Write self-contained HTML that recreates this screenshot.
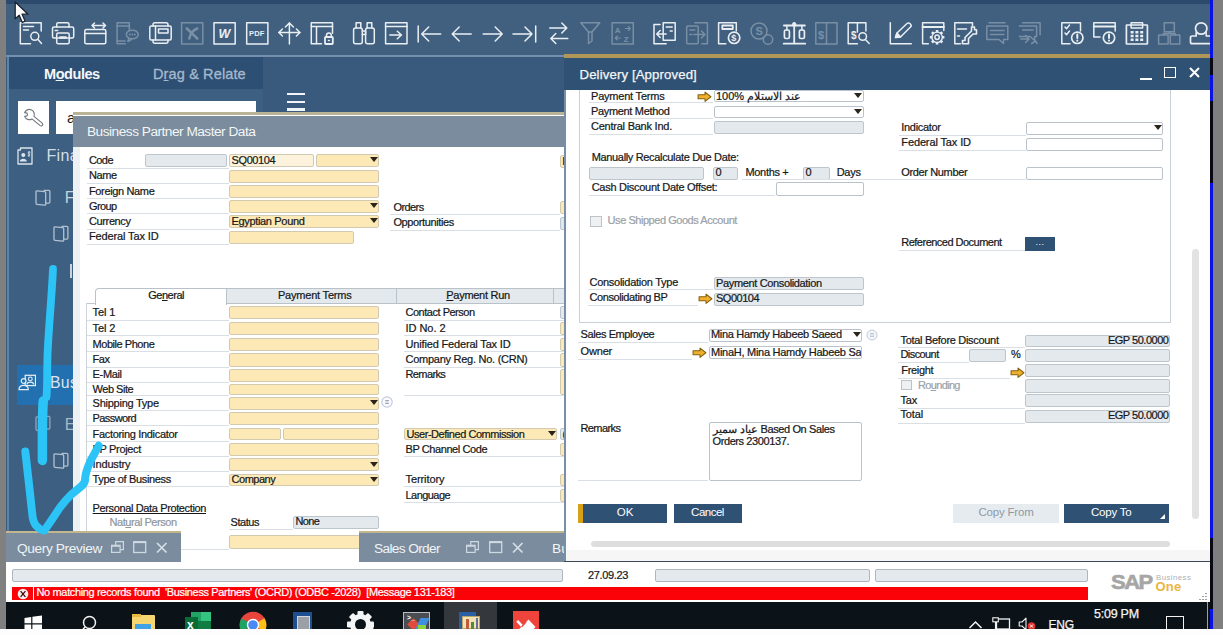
<!DOCTYPE html>
<html><head><meta charset="utf-8"><title>SAP Business One</title>
<style>
*{box-sizing:border-box;margin:0;padding:0}
html,body{width:1223px;height:635px;overflow:hidden;background:#fff}
body{font-family:"Liberation Sans",sans-serif;font-size:11px;color:#111;position:relative}
#root{position:absolute;left:0;top:0;width:1223px;height:635px;overflow:hidden;background:#fff}
.a{position:absolute}
.t{position:absolute;white-space:nowrap;line-height:1}
.lbl{position:absolute;white-space:nowrap;font-size:11px;line-height:13px;height:13px;color:#16181a;-webkit-text-stroke:.220px currentColor}
.ul{position:absolute;height:1px;background:#d9dfe4}
.fy{position:absolute;background:#fde9b5;border:1px solid #d2cab0;border-radius:2px}
.fg{position:absolute;background:#e4e9ed;border:1px solid #bdc6cd;border-radius:2px}
.fw{position:absolute;background:#fff;border:1px solid #bac3cb;border-radius:2px}
.ft{position:absolute;left:1.500px;top:-1.500px;white-space:nowrap;font-size:11px;line-height:12px;color:#16181a;-webkit-text-stroke:.220px currentColor}
.dd{position:absolute;right:.500px;top:2.200px;width:0;height:0;border-left:4px solid transparent;border-right:4px solid transparent;border-top:5px solid #2a241a}
.ic{position:absolute;overflow:visible}
.ic *{fill:none;stroke:#e9eef3;stroke-width:1.5;stroke-linecap:round;stroke-linejoin:round}
.ic.dim{opacity:.32}
</style></head>
<body><div id="root">
<div class="a" style="left:0;top:0;width:6px;height:629px;background:#808080"></div>
<div class="a" style="left:1212px;top:0;width:11px;height:629px;background:#7f7f7f"></div>
<div class="a" style="left:1209.500px;top:0;width:3.500px;height:629px;background:#0a0a14"></div>
<div class="a" style="left:1210px;top:0;width:3px;height:101px;background:#0b12e8"></div>
<div class="a" style="left:1210px;top:58px;width:3px;height:17px;background:#0a0a14"></div>
<div class="a" style="left:1210px;top:183px;width:3px;height:355px;background:#0b12e8"></div>
<div class="a" style="left:1210px;top:609px;width:3px;height:20px;background:#0b12e8"></div>
<div class="a" style="left:6px;top:0;width:1204px;height:602px;background:#395a7c"></div>
<div class="a" style="left:6px;top:0;width:1204px;height:4px;background:#2b4a6c"></div>
<div class="a" style="left:6px;top:4px;width:1204px;height:51px;background:#41607f"></div>
<div class="a" style="left:6px;top:55px;width:1204px;height:2px;background:#7490ad"></div>
<div class="a" style="left:7px;top:57px;width:256px;height:32.800px;background:#2d4f74"></div>
<div class="a" style="left:7px;top:89px;width:256px;height:450px;background:#3c5f82"></div>
<div class="a" style="left:7px;top:57px;width:1.500px;height:476px;background:#5f82a5"></div>
<div class="t" style="left:44px;top:67px;font-size:14.500px;font-weight:bold;color:#f4f7fa;letter-spacing:-0.450px">M<u>o</u>dules</div>
<div class="t" style="left:153px;top:67px;font-size:14.500px;color:#a6b9cc;letter-spacing:0.130px;-webkit-text-stroke:.300px #a6b9cc">D<u>r</u>ag &amp; Relate</div>
<div class="a" style="left:17.500px;top:101px;width:31.500px;height:33.300px;background:#fff"></div>
<div class="a" style="left:55.700px;top:100.700px;width:200px;height:33.600px;background:#fff"></div>
<svg class="a" style="left:17px;top:101px" width="32" height="33" viewBox="0 0 32 33"><path d="M7.600 11.600A5 5 0 0 1 16.980 15.430L25.200 22.160A1.600 1.600 0 0 1 23.190 24.640L14.960 17.900A5 5 0 0 1 7.600 15.400L10 14.900A2.400 2.400 0 0 0 10 12.100Z" fill="none" stroke="#73787d" stroke-width="1.150" stroke-linejoin="round"/></svg>
<div class="t" style="left:67px;top:110px;font-size:15px;color:#222">a</div>
<div class="a" style="left:287px;top:92.5px;width:18px;height:2.300px;background:#f2f5f8"></div>
<div class="a" style="left:287px;top:100.5px;width:18px;height:2.300px;background:#f2f5f8"></div>
<div class="a" style="left:287px;top:108.3px;width:18px;height:2.300px;background:#f2f5f8"></div>
<svg class="a" style="left:16.500px;top:147px" width="16" height="18" viewBox="0 0 16 18"><path d="M3.500 3V1h11.500v16H1V3z" fill="none" stroke="#dbe4ec" stroke-width="1.300" stroke-linejoin="round"/><circle cx="6.300" cy="8" r="2" fill="#dbe4ec"/><path d="M2.800 14.500c0-3.600 7-3.600 7 0z" fill="#dbe4ec"/><path d="M12 4v6M13.300 5.300c-1.800-1-3 .8-1.300 1.500 1.700.700.500 2.500-1.300 1.500" fill="none" stroke="#dbe4ec" stroke-width=".900"/></svg>
<div class="t" style="left:46.500px;top:148px;font-size:16px;color:#d3dde7;letter-spacing:.300px">Fina</div>
<svg class="a" style="left:34.5px;top:188.8px" width="17" height="18" viewBox="0 0 17 18"><path d="M1 2.800q0-1.100 1.100-1l7.600.900q1 .100 1 1.100v11.400q0 1.100-1.100 1l-7.600-.900q-1-.100-1-1.100z" fill="none" stroke="#b3c1cf" stroke-width="1.300" stroke-linejoin="round"/><path d="M8.500 1.300h5.300q1.100 0 1.100 1.100v10.600q0 1.100-1.100 1.100h-3" fill="none" stroke="#b3c1cf" stroke-width="1.300" stroke-linejoin="round"/></svg>
<div class="t" style="left:64.800px;top:189.500px;font-size:15.800px;color:#c8d3de">F</div>
<svg class="a" style="left:52.5px;top:225px" width="17" height="18" viewBox="0 0 17 18"><path d="M1 2.800q0-1.100 1.100-1l7.600.900q1 .100 1 1.100v11.400q0 1.100-1.100 1l-7.600-.900q-1-.100-1-1.100z" fill="none" stroke="#b3c1cf" stroke-width="1.300" stroke-linejoin="round"/><path d="M8.500 1.300h5.300q1.100 0 1.100 1.100v10.600q0 1.100-1.100 1.100h-3" fill="none" stroke="#b3c1cf" stroke-width="1.300" stroke-linejoin="round"/></svg>
<div class="a" style="left:70.300px;top:264px;width:1.800px;height:14px;background:#c8d3de"></div>
<div class="a" style="left:16.600px;top:365.400px;width:57px;height:39.600px;background:#2270b0"></div>
<svg class="a" style="left:17.600px;top:373.500px" width="18.500" height="17" viewBox="0 0 18 16"><rect x="7" y="1" width="10" height="10" fill="none" stroke="#e6edf3" stroke-width="1.200"/><circle cx="12" cy="4.500" r="1.800" fill="none" stroke="#e6edf3" stroke-width="1.100"/><path d="M8.800 10c0-3.200 6.400-3.200 6.400 0" fill="none" stroke="#e6edf3" stroke-width="1.100"/><circle cx="5.500" cy="6.500" r="2.300" fill="#2270b0" stroke="#e6edf3" stroke-width="1.200"/><path d="M1 15c0-5.500 9-5.500 9 0z" fill="#2270b0" stroke="#e6edf3" stroke-width="1.200"/></svg>
<div class="t" style="left:50px;top:374.500px;font-size:15.800px;color:#dbe5ee;letter-spacing:.300px">Bus</div>
<svg class="a" style="left:35px;top:415px" width="17" height="18" viewBox="0 0 17 18"><path d="M1 2.800q0-1.100 1.100-1l7.600.900q1 .100 1 1.100v11.400q0 1.100-1.100 1l-7.600-.900q-1-.100-1-1.100z" fill="none" stroke="#8fa5bb" stroke-width="1.300" stroke-linejoin="round"/><path d="M8.500 1.300h5.300q1.100 0 1.100 1.100v10.600q0 1.100-1.100 1.100h-3" fill="none" stroke="#8fa5bb" stroke-width="1.300" stroke-linejoin="round"/></svg>
<div class="t" style="left:64.800px;top:417px;font-size:15.800px;color:#aab8c8">E</div>
<svg class="a" style="left:52.8px;top:451.5px" width="17" height="18" viewBox="0 0 17 18"><path d="M1 2.800q0-1.100 1.100-1l7.600.900q1 .100 1 1.100v11.400q0 1.100-1.100 1l-7.600-.900q-1-.100-1-1.100z" fill="none" stroke="#b3c1cf" stroke-width="1.300" stroke-linejoin="round"/><path d="M8.500 1.300h5.300q1.100 0 1.100 1.100v10.600q0 1.100-1.100 1.100h-3" fill="none" stroke="#b3c1cf" stroke-width="1.300" stroke-linejoin="round"/></svg>
<div class="a" style="left:72.500px;top:113px;width:493.500px;height:449px;background:#fff"></div>
<div class="a" style="left:72.500px;top:146px;width:7.500px;height:416px;background:#eef1f4"></div>
<div class="a" style="left:72.500px;top:112.200px;width:493.500px;height:3.300px;background:#bab295"></div>
<div class="a" style="left:72.500px;top:115.500px;width:493.500px;height:31px;background:#7a8c9d"></div>
<div class="t" style="left:87px;top:124.5px;font-size:13.7px;color:#f3f6f8;letter-spacing:-0.509px;">Business Partner Master Data</div>
<div class="lbl" style="left:89px;top:154.2px;letter-spacing:-0.599px;">Code</div>
<div class="ul" style="left:87px;top:167.5px;width:142px"></div>
<div class="lbl" style="left:89px;top:169.45px;letter-spacing:-0.436px;">Name</div>
<div class="ul" style="left:87px;top:182.75px;width:142px"></div>
<div class="lbl" style="left:89px;top:184.7px;letter-spacing:-0.358px;">Foreign Name</div>
<div class="ul" style="left:87px;top:198px;width:142px"></div>
<div class="lbl" style="left:89px;top:199.95px;letter-spacing:-0.595px;">Group</div>
<div class="ul" style="left:87px;top:213.25px;width:142px"></div>
<div class="lbl" style="left:89px;top:215.2px;letter-spacing:-0.378px;">Currency</div>
<div class="ul" style="left:87px;top:228.5px;width:142px"></div>
<div class="lbl" style="left:89px;top:230.45px;letter-spacing:-0.131px;">Federal Tax ID</div>
<div class="ul" style="left:87px;top:243.75px;width:142px"></div>
<div class="fg" style="left:145px;top:154.3px;width:82px;height:13.2px;"></div>
<div class="fy" style="left:229px;top:154.3px;width:85px;height:13.2px;background:#fdf3dd"><span class="ft" style="letter-spacing:-0.383px;">SQ00104</span></div>
<div class="fy" style="left:316px;top:154.3px;width:63px;height:13.2px;"><i class="dd"></i></div>
<div class="fy" style="left:229px;top:169.55px;width:150px;height:13.2px;"></div>
<div class="fy" style="left:229px;top:184.8px;width:150px;height:13.2px;"></div>
<div class="fy" style="left:229px;top:200.05px;width:150px;height:13.2px;"><i class="dd"></i></div>
<div class="fy" style="left:229px;top:215.3px;width:150px;height:13.2px;"><span class="ft" style="letter-spacing:-0.334px;">Egyptian Pound</span><i class="dd"></i></div>
<div class="fy" style="left:229px;top:230.55px;width:125px;height:13.2px;"></div>
<div class="lbl" style="left:393.4px;top:200.8px;letter-spacing:-0.570px;">Orders</div>
<div class="ul" style="left:390px;top:214px;width:170px"></div>
<div class="lbl" style="left:393.4px;top:216.3px;letter-spacing:-0.387px;">Opportunities</div>
<div class="ul" style="left:390px;top:229.5px;width:170px"></div>
<div class="fy" style="left:560px;top:155px;width:20px;height:13.2px;"><span class="ft" style="letter-spacing:-0.330px;"><b>E</b></span></div>
<div class="fy" style="left:560px;top:201.3px;width:20px;height:12.7px;"></div>
<div class="fg" style="left:560px;top:217px;width:20px;height:12.5px;background:#dfe6ee"></div>
<div class="a" style="left:86px;top:303.300px;width:481px;height:1px;background:#bfc7ce"></div>
<div class="a" style="left:86px;top:303.300px;width:1px;height:259px;background:#cdd3d9"></div>
<div class="a" style="left:226px;top:287.500px;width:171px;height:16px;background:#e3e9ed;border:1px solid #b9c1c9;border-left:none"></div>
<div class="a" style="left:397px;top:287.500px;width:157px;height:16px;background:#e3e9ed;border:1px solid #b9c1c9;border-left:none"></div>
<div class="a" style="left:554px;top:287.500px;width:20px;height:16px;background:#e3e9ed;border:1px solid #b9c1c9;border-left:none"></div>
<div class="a" style="left:95px;top:287.500px;width:132px;height:17px;background:#fff;border:1px solid #b9c1c9;border-bottom:none;border-radius:4px 0 0 0"></div>
<div class="lbl" style="left:148.2px;top:289px;letter-spacing:-0.462px;">Ge<u>n</u>eral</div>
<div class="lbl" style="left:277.9px;top:289px;letter-spacing:-0.193px;">Payment Terms</div>
<div class="lbl" style="left:446.3px;top:289px;letter-spacing:-0.286px;"><u>P</u>ayment Run</div>
<div class="lbl" style="left:92.6px;top:306.15px;letter-spacing:-0.107px;">Tel 1</div>
<div class="ul" style="left:87px;top:319.5px;width:142px"></div>
<div class="fy" style="left:229px;top:306.2px;width:150px;height:13.3px;"></div>
<div class="lbl" style="left:92.6px;top:321.85px;letter-spacing:-0.107px;">Tel 2</div>
<div class="ul" style="left:87px;top:335.2px;width:142px"></div>
<div class="fy" style="left:229px;top:321.9px;width:150px;height:13.3px;"></div>
<div class="lbl" style="left:92.6px;top:337.55px;letter-spacing:-0.464px;">Mobile Phone</div>
<div class="ul" style="left:87px;top:350.9px;width:142px"></div>
<div class="fy" style="left:229px;top:337.6px;width:150px;height:13.3px;"></div>
<div class="lbl" style="left:92.6px;top:353.25px;letter-spacing:-0.446px;">Fax</div>
<div class="ul" style="left:87px;top:366.6px;width:142px"></div>
<div class="fy" style="left:229px;top:353.3px;width:150px;height:13.3px;"></div>
<div class="lbl" style="left:92.6px;top:368.45px;letter-spacing:-0.345px;">E-Mail</div>
<div class="ul" style="left:87px;top:381.8px;width:142px"></div>
<div class="fy" style="left:229px;top:368.5px;width:150px;height:13.3px;"></div>
<div class="lbl" style="left:92.6px;top:382.75px;letter-spacing:-0.491px;">Web Site</div>
<div class="ul" style="left:87px;top:395.2px;width:142px"></div>
<div class="fy" style="left:229px;top:383.7px;width:150px;height:11.5px;"></div>
<div class="lbl" style="left:92.6px;top:397px;letter-spacing:-0.255px;">Shipping Type</div>
<div class="ul" style="left:87px;top:410.1px;width:142px"></div>
<div class="fy" style="left:229px;top:397.3px;width:150px;height:12.8px;"><i class="dd"></i></div>
<div class="lbl" style="left:92.6px;top:412.2px;letter-spacing:-0.600px;">Password</div>
<div class="ul" style="left:87px;top:425.4px;width:142px"></div>
<div class="fy" style="left:229px;top:412.4px;width:150px;height:13px;"></div>
<div class="lbl" style="left:92.6px;top:427.65px;letter-spacing:-0.321px;">Factoring Indicator</div>
<div class="ul" style="left:87px;top:440.5px;width:142px"></div>
<div class="fy" style="left:229px;top:428.2px;width:52px;height:12.3px;"></div>
<div class="fy" style="left:283px;top:428.2px;width:96px;height:12.3px;"></div>
<div class="lbl" style="left:92.6px;top:442.75px;letter-spacing:-0.337px;">BP Project</div>
<div class="ul" style="left:87px;top:455.6px;width:142px"></div>
<div class="fy" style="left:229px;top:443.3px;width:150px;height:12.3px;"></div>
<div class="lbl" style="left:92.6px;top:457.85px;letter-spacing:-0.166px;">Industry</div>
<div class="ul" style="left:87px;top:470.7px;width:142px"></div>
<div class="fy" style="left:229px;top:458.4px;width:150px;height:12.3px;"><i class="dd"></i></div>
<div class="lbl" style="left:92.6px;top:473.3px;letter-spacing:-0.342px;">Type of Business</div>
<div class="ul" style="left:87px;top:486.4px;width:142px"></div>
<div class="fy" style="left:229px;top:473.6px;width:150px;height:12.8px;"><span class="ft" style="letter-spacing:-0.468px;">Company</span><i class="dd"></i></div>
<svg class="a" style="left:381px;top:396.3px" width="12" height="12" viewBox="0 0 12 12"><circle cx="6" cy="6" r="5.200" fill="#fbfbfe" stroke="#c3c9e0" stroke-width="1.200"/><path d="M4.200 4.800h3.600M4.200 7.200h3.600" stroke="#8087a6" stroke-width="1.100"/></svg>
<div class="lbl" style="left:405.5px;top:306.15px;letter-spacing:-0.480px;">Contact Person</div>
<div class="ul" style="left:404px;top:319.5px;width:160px"></div>
<div class="fg" style="left:560px;top:306.2px;width:20px;height:13.3px;"></div>
<div class="lbl" style="left:405.5px;top:321.85px;letter-spacing:-0.043px;">ID No. 2</div>
<div class="ul" style="left:404px;top:335.2px;width:160px"></div>
<div class="fy" style="left:560px;top:321.9px;width:20px;height:13.3px;"></div>
<div class="lbl" style="left:405.5px;top:337.55px;letter-spacing:-0.165px;">Unified Federal Tax ID</div>
<div class="ul" style="left:404px;top:350.9px;width:160px"></div>
<div class="fy" style="left:560px;top:337.6px;width:20px;height:13.3px;"></div>
<div class="lbl" style="left:405.5px;top:353.25px;letter-spacing:-0.262px;">Company Reg. No. (CRN)</div>
<div class="ul" style="left:404px;top:366.6px;width:160px"></div>
<div class="fy" style="left:560px;top:353.3px;width:20px;height:13.3px;"></div>
<div class="lbl" style="left:405.5px;top:368.45px;letter-spacing:-0.615px;">Remarks</div>
<div class="ul" style="left:404px;top:395.2px;width:160px"></div>
<div class="fy" style="left:560px;top:368.5px;width:20px;height:26.7px;"></div>
<div class="lbl" style="left:405.5px;top:442.75px;letter-spacing:-0.418px;">BP Channel Code</div>
<div class="ul" style="left:404px;top:455.6px;width:160px"></div>
<div class="fy" style="left:560px;top:443.3px;width:20px;height:12.3px;"></div>
<div class="lbl" style="left:405.5px;top:473.3px;letter-spacing:-0.092px;">Territory</div>
<div class="ul" style="left:404px;top:486.4px;width:160px"></div>
<div class="fy" style="left:560px;top:473.6px;width:20px;height:12.8px;"></div>
<div class="lbl" style="left:405.5px;top:488.5px;letter-spacing:-0.543px;">Language</div>
<div class="ul" style="left:404px;top:501.6px;width:160px"></div>
<div class="fy" style="left:560px;top:488.8px;width:20px;height:12.8px;"></div>
<div class="fy" style="left:404px;top:428.2px;width:153px;height:12.3px;"><span class="ft" style="letter-spacing:-0.455px;">User-Defined Commission</span><i class="dd"></i></div>
<div class="fg" style="left:560px;top:428.2px;width:20px;height:12.3px;"><span class="ft" style="letter-spacing:-0.165px;">(</span></div>
<div class="lbl" style="left:92.6px;top:502px;letter-spacing:-0.371px;text-decoration:underline">Personal Data Protection</div>
<div class="lbl" style="left:109.6px;top:515.6px;letter-spacing:-0.455px;color:#8f979e">Nat<u>u</u>ral Person</div>
<div class="lbl" style="left:230.6px;top:515.6px;letter-spacing:-0.464px;">Status</div>
<div class="ul" style="left:229px;top:529px;width:64px"></div>
<div class="fg" style="left:293px;top:515.8px;width:86px;height:13.3px;"><span class="ft" style="letter-spacing:-0.674px;">None</span></div>
<div class="fy" style="left:229px;top:535px;width:150px;height:14px;"></div>
<div class="ul" style="left:87px;top:549px;width:142px"></div>
<div class="a" style="left:6px;top:531.3px;width:175px;height:30.700px;background:#7a8c9d;border-top:2.700px solid #c4b68c"></div>
<div class="t" style="left:17px;top:542px;font-size:13.7px;color:#f0f4f7;letter-spacing:-0.372px;">Query Preview</div>
<svg class="a" style="left:111px;top:541.3px" width="13" height="12" viewBox="0 0 13 12"><path d="M4.700 4V.6h7.700v8h-3" fill="none" stroke="#cfd9e2" stroke-width="1.200"/><rect x=".6" y="4.300" width="8.500" height="7.100" fill="none" stroke="#cfd9e2" stroke-width="1.200"/><path d="M.6 5.200h8.500" stroke="#cfd9e2" stroke-width="1.200"/></svg>
<svg class="a" style="left:133px;top:541.3px" width="14" height="13" viewBox="0 0 14 13"><rect x=".7" y=".7" width="12" height="10.800" fill="none" stroke="#cfd9e2" stroke-width="1.300"/><path d="M.7 1.500h12" stroke="#cfd9e2" stroke-width="1.300"/></svg>
<svg class="a" style="left:156.3px;top:541.8px" width="12" height="12" viewBox="0 0 12 12"><path d="M1 1l9.500 9.500M10.500 1L1 10.500" fill="none" stroke="#d6dfe7" stroke-width="1.700"/></svg>
<div class="a" style="left:359px;top:531.3px;width:210px;height:30.700px;background:#7a8c9d;border-top:2.700px solid #c4b68c"></div>
<div class="t" style="left:374px;top:542px;font-size:13.7px;color:#f0f4f7;letter-spacing:-0.645px;">Sales Order</div>
<svg class="a" style="left:466px;top:541.3px" width="13" height="12" viewBox="0 0 13 12"><path d="M4.700 4V.6h7.700v8h-3" fill="none" stroke="#cfd9e2" stroke-width="1.200"/><rect x=".6" y="4.300" width="8.500" height="7.100" fill="none" stroke="#cfd9e2" stroke-width="1.200"/><path d="M.6 5.200h8.500" stroke="#cfd9e2" stroke-width="1.200"/></svg>
<svg class="a" style="left:489px;top:541.3px" width="14" height="13" viewBox="0 0 14 13"><rect x=".7" y=".7" width="12" height="10.800" fill="none" stroke="#cfd9e2" stroke-width="1.300"/><path d="M.7 1.500h12" stroke="#cfd9e2" stroke-width="1.300"/></svg>
<svg class="a" style="left:512px;top:541.8px" width="12" height="12" viewBox="0 0 12 12"><path d="M1 1l9.500 9.500M10.500 1L1 10.500" fill="none" stroke="#d6dfe7" stroke-width="1.700"/></svg>
<div class="t" style="left:552px;top:542px;font-size:13.7px;color:#f3f6f8;letter-spacing:0.000px;">Bu</div>
<svg class="a" style="left:0;top:0;pointer-events:none" width="1223" height="635" viewBox="0 0 1223 635"><path d="M53 269 C51.500 300 48.500 330 47.500 355 C47 375 47.300 388 46.500 397" fill="none" stroke="#2cc3f6" stroke-width="7.800" stroke-linecap="round" stroke-linejoin="round"/><path d="M43.300 401 C42 415 42.500 440 42.400 460.500" fill="none" stroke="#2cc3f6" stroke-width="9.500" stroke-linecap="round" stroke-linejoin="round"/><path d="M25.300 451.500L29 484.300L32.600 516.900Q34 524 37 526.500Q40 530 44.400 530.500Q48.500 524.500 52.500 518.700L59.700 507.900Q65 500.500 71.500 494.300L81.500 486.100Q85.300 483 85.100 478.500Q85.500 472 90.500 460.800L98.700 445.800" fill="none" stroke="#2cc3f6" stroke-width="8" stroke-linecap="round" stroke-linejoin="round"/></svg>
<div class="a" style="left:564px;top:54px;width:646px;height:508px;background:#fff"></div>
<div class="a" style="left:564px;top:90px;width:2px;height:472px;background:#7690a9"></div>
<div class="a" style="left:564px;top:561px;width:646px;height:1px;background:#3b4956"></div>
<div class="a" style="left:579px;top:88px;width:592px;height:235px;border:1px solid #c9d0d7;border-top:none"></div>
<div class="a" style="left:566px;top:550px;width:644px;height:11px;background:#f6f6f6"></div>
<div class="lbl" style="left:591px;top:89.8px;letter-spacing:-0.209px;">Payment Terms</div>
<div class="ul" style="left:589px;top:102px;width:124px"></div>
<svg class="a" style="left:697.3px;top:90.8px" width="15" height="11.500" viewBox="0 0 14 11" preserveAspectRatio="none"><path d="M1 3.500h6.500V1L13 5.500 7.500 10V7.500H1z" fill="#f0b02e" stroke="#86610e" stroke-width="1" stroke-linejoin="round"/></svg>
<div class="fw" style="left:713.5px;top:90.3px;width:150px;height:11.7px;"><span class="ft" style="letter-spacing:-2.547px;">100% &#x639;&#x646;&#x62F; &#x627;&#x644;&#x627;&#x633;&#x62A;&#x644;&#x627;&#x645;</span><i class="dd"></i></div>
<div class="lbl" style="left:591px;top:104.8px;letter-spacing:-0.333px;">Payment Method</div>
<div class="ul" style="left:589px;top:118px;width:124px"></div>
<div class="fw" style="left:713.5px;top:105.5px;width:150px;height:12.5px;"><i class="dd"></i></div>
<div class="lbl" style="left:591px;top:120.3px;letter-spacing:-0.235px;">Central Bank Ind.</div>
<div class="ul" style="left:589px;top:134px;width:124px"></div>
<div class="fg" style="left:713.5px;top:121px;width:150px;height:13px;"></div>
<div class="lbl" style="left:591.7px;top:150.8px;letter-spacing:-0.338px;">Manually Recalculate Due Date:</div>
<div class="fg" style="left:589px;top:166.5px;width:114.5px;height:13px;"></div>
<div class="fg" style="left:713px;top:166.5px;width:25px;height:13px;"><span class="ft" style="letter-spacing:-0.275px;">0</span></div>
<div class="lbl" style="left:745.5px;top:165.8px;letter-spacing:-0.332px;">Months +</div>
<div class="fg" style="left:803px;top:166.5px;width:27px;height:13px;"><span class="ft" style="letter-spacing:-0.275px;">0</span></div>
<div class="lbl" style="left:836.7px;top:165.8px;letter-spacing:-0.265px;">Days</div>
<div class="ul" style="left:742px;top:179px;width:284px"></div>
<div class="lbl" style="left:591.7px;top:181.3px;letter-spacing:-0.288px;">Cash Discount Date Offset:</div>
<div class="ul" style="left:589px;top:195px;width:186px"></div>
<div class="fw" style="left:775.5px;top:182px;width:88px;height:13.5px;"></div>
<div class="a" style="left:590px;top:216px;width:12px;height:11px;background:#eef0f1;border:1px solid #bcc2c7"></div>
<div class="lbl" style="left:607.6px;top:214.3px;letter-spacing:-0.454px;color:#9aa2a9">Use Shipped Goods Account</div>
<div class="lbl" style="left:589.5px;top:275.8px;letter-spacing:-0.270px;">Consolidation Type</div>
<div class="ul" style="left:588px;top:289px;width:125px"></div>
<div class="fg" style="left:713.5px;top:277px;width:150px;height:13px;"><span class="ft" style="letter-spacing:-0.354px;">Payment Consolidation</span></div>
<div class="lbl" style="left:589.5px;top:291.3px;letter-spacing:-0.406px;">Consolidating BP</div>
<div class="ul" style="left:588px;top:305px;width:110px"></div>
<svg class="a" style="left:698px;top:293px" width="15" height="11.500" viewBox="0 0 14 11" preserveAspectRatio="none"><path d="M1 3.500h6.500V1L13 5.500 7.500 10V7.500H1z" fill="#f0b02e" stroke="#86610e" stroke-width="1" stroke-linejoin="round"/></svg>
<div class="fg" style="left:713.5px;top:292.5px;width:150px;height:13px;"><span class="ft" style="letter-spacing:-0.498px;">SQ00104</span></div>
<div class="lbl" style="left:580.5px;top:328.3px;letter-spacing:-0.406px;">Sales Employee</div>
<div class="ul" style="left:578px;top:342px;width:130px"></div>
<div class="fw" style="left:708.5px;top:328.5px;width:153.5px;height:13px;"><span class="ft" style="letter-spacing:-0.326px;">Mina Hamdy Habeeb Saeed</span><i class="dd"></i></div>
<svg class="a" style="left:866px;top:329px" width="12" height="12" viewBox="0 0 12 12"><circle cx="6" cy="6" r="5" fill="#f4f6fa" stroke="#c3cbd9" stroke-width="1"/><path d="M4 4.800h4M4 7.200h4" stroke="#aab5c9" stroke-width="1"/></svg>
<div class="lbl" style="left:580.5px;top:345.3px;letter-spacing:-0.160px;">Owner</div>
<div class="ul" style="left:578px;top:359px;width:114px"></div>
<svg class="a" style="left:692px;top:347px" width="15" height="11.500" viewBox="0 0 14 11" preserveAspectRatio="none"><path d="M1 3.500h6.500V1L13 5.500 7.500 10V7.500H1z" fill="#f0b02e" stroke="#86610e" stroke-width="1" stroke-linejoin="round"/></svg>
<div class="fw" style="left:708.5px;top:346px;width:153.5px;height:13px;overflow:hidden"><span class="ft" style="letter-spacing:-0.272px;">MinaH, Mina Hamdy Habeeb Sa</span></div>
<div class="lbl" style="left:580.5px;top:421.8px;letter-spacing:-0.601px;">Remarks</div>
<div class="ul" style="left:578px;top:480px;width:130px"></div>
<div class="fw" style="left:708.500px;top:422px;width:153.500px;height:58.500px"><span class="ft" style="top:0;left:3px;line-height:12.300px;letter-spacing:-0.400px">&#x639;&#x64A;&#x627;&#x62F; &#x633;&#x645;&#x64A;&#x631; Based On Sales<br>Orders 2300137.</span></div>
<div class="a" style="left:578px;top:504px;width:89px;height:19px;background:#2f5173;border-left:5px solid #d8a016;color:#fff;font-size:11.500px;line-height:17px;text-align:center;">OK</div>
<div class="a" style="left:673.500px;top:504px;width:68px;height:19px;background:#2f5173;color:#fff;font-size:11.500px;line-height:17px;text-align:center;letter-spacing:-0.500px">Cancel</div>
<div class="a" style="left:953px;top:504px;width:106px;height:19px;background:#e6ebf0;color:#8e99a4;font-size:11.500px;line-height:17px;text-align:center;letter-spacing:-0.200px">Copy From</div>
<div class="a" style="left:1063.500px;top:504px;width:105.500px;height:19px;background:#2f5173;color:#fff;font-size:11.500px;line-height:17px;text-align:center;padding-right:10px;letter-spacing:-0.200px">Copy To</div>
<div class="a" style="left:1160px;top:514px;width:0;height:0;border-left:5px solid transparent;border-bottom:5px solid #fff"></div>
<div class="a" style="left:591px;top:541.200px;width:579px;height:6.300px;border-radius:3.150px;background:#dedede"></div>
<div class="a" style="left:1192px;top:249px;width:7px;height:270px;border-radius:3.500px;background:#e2e2e2"></div>
<div class="lbl" style="left:901.3px;top:120.8px;letter-spacing:-0.321px;">Indicator</div>
<div class="ul" style="left:899px;top:135px;width:127px"></div>
<div class="fw" style="left:1026px;top:121.5px;width:137px;height:13px;"><i class="dd"></i></div>
<div class="lbl" style="left:901.3px;top:136.3px;letter-spacing:-0.124px;">Federal Tax ID</div>
<div class="ul" style="left:899px;top:150px;width:127px"></div>
<div class="fw" style="left:1026px;top:137.5px;width:137px;height:13px;"></div>
<div class="lbl" style="left:901.3px;top:166.3px;letter-spacing:-0.367px;">Order Number</div>
<div class="fw" style="left:1026px;top:167px;width:137px;height:13px;"></div>
<div class="lbl" style="left:901.3px;top:236.3px;letter-spacing:-0.514px;">Referenced Document</div>
<div class="ul" style="left:899px;top:249.5px;width:127px"></div>
<div class="a" style="left:1025px;top:237px;width:30px;height:14px;background:#2f5173;color:#fff;font-size:9px;line-height:11px;text-align:center;letter-spacing:.500px">...</div>
<div class="lbl" style="left:900.5px;top:333.6px;letter-spacing:-0.303px;">Total Before Discount</div>
<div class="ul" style="left:898px;top:346.5px;width:127px"></div>
<div class="fg" style="left:1024.5px;top:334.5px;width:145px;height:12px;"></div>
<div class="lbl" style="left:1024.500px;top:333.5px;width:144px;text-align:right;letter-spacing:-0.477px">EGP 50.0000</div>
<div class="lbl" style="left:900.5px;top:348.4px;letter-spacing:-0.587px;">Discount</div>
<div class="ul" style="left:898px;top:362.1px;width:71px"></div>
<div class="fg" style="left:969px;top:348.8px;width:37px;height:13.3px;"></div>
<div class="lbl" style="left:1011px;top:348.4px;letter-spacing:-0.440px;">%</div>
<div class="fg" style="left:1024.5px;top:348.8px;width:145px;height:13.3px;"></div>
<div class="lbl" style="left:901.3px;top:364px;letter-spacing:-0.334px;">Freight</div>
<div class="ul" style="left:898px;top:377.5px;width:112px"></div>
<svg class="a" style="left:1010px;top:366.5px" width="15" height="11.500" viewBox="0 0 14 11" preserveAspectRatio="none"><path d="M1 3.500h6.500V1L13 5.500 7.500 10V7.500H1z" fill="#f0b02e" stroke="#86610e" stroke-width="1" stroke-linejoin="round"/></svg>
<div class="fg" style="left:1024.5px;top:364.2px;width:145px;height:13.3px;"></div>
<div class="a" style="left:901px;top:380px;width:11px;height:10px;background:#eef0f1;border:1px solid #bcc2c7"></div>
<div class="lbl" style="left:918px;top:378.6px;letter-spacing:-0.662px;color:#9aa2a9">Ro<u>u</u>nding</div>
<div class="fg" style="left:1024.5px;top:379.3px;width:145px;height:13.3px;"></div>
<div class="lbl" style="left:900.5px;top:393.5px;letter-spacing:-0.239px;">Tax</div>
<div class="fg" style="left:1024.5px;top:394.2px;width:145px;height:13.3px;"></div>
<div class="ul" style="left:898px;top:407.5px;width:127px"></div>
<div class="lbl" style="left:900.5px;top:408.3px;letter-spacing:-0.147px;">Total</div>
<div class="ul" style="left:898px;top:422.8px;width:127px"></div>
<div class="fg" style="left:1024.5px;top:409.5px;width:145px;height:13.3px;"></div>
<div class="lbl" style="left:1024.500px;top:408.7px;width:144px;text-align:right;letter-spacing:-0.477px">EGP 50.0000</div>
<div class="a" style="left:564px;top:54.300px;width:646px;height:3.700px;background:#b09758"></div>
<div class="a" style="left:564px;top:58px;width:646px;height:31.500px;background:#2f5173"></div>
<div class="t" style="left:579.5px;top:67.5px;font-size:13.2px;color:#f3f6f8;letter-spacing:0.122px;-webkit-text-stroke:.250px #f3f6f8;">Delivery [Approved]</div>
<div class="a" style="left:1140px;top:78px;width:12px;height:2px;background:#fff"></div>
<div class="a" style="left:1164px;top:67px;width:12px;height:11px;border:1.500px solid #fff"></div>
<svg class="a" style="left:1189px;top:67px" width="11" height="11" viewBox="0 0 11 11"><path d="M1 1l9 9M10 1L1 10" stroke="#fff" stroke-width="2" fill="none"/></svg>
<svg class="a" style="left:0;top:0" width="1210" height="60" viewBox="0 0 1210 60">
<g transform="translate(19.5,22)" stroke="#e9eef3" fill="none" stroke-width="1.5" stroke-linecap="round" stroke-linejoin="round" ><path d="M11 21.7H.8V.8h20.9V9"/><path d="M4 4.5h10M4 8h5"/><circle cx="15.3" cy="14.3" r="4"/><path d="M18.3 17.3l3.7 4.2"/></g>
<g transform="translate(51.7,22)" stroke="#e9eef3" fill="none" stroke-width="1.5" stroke-linecap="round" stroke-linejoin="round" ><path d="M5 5V2.3c0-.8.7-1.5 1.5-1.5h9.3c.8 0 1.5.7 1.5 1.5V5"/><rect x=".8" y="5" width="21.2" height="11" rx="1.5"/><rect x="5" y="11" width="12.5" height="10.7" rx="1.5"/><path d="M3.5 8.5h2.5"/><path d="M8.5 15.5h5.5" stroke-width="2.4"/></g>
<g transform="translate(84,22)" stroke="#e9eef3" fill="none" stroke-width="1.5" stroke-linecap="round" stroke-linejoin="round" ><rect x=".8" y="7.5" width="21" height="14.2" rx="1.5"/><path d="M.8 11.5h21"/><path d="M8 3.5h13.5M10.5 1L8 3.5l2.5 2.5M19 1l2.5 2.5L19 6"/></g>
<g transform="translate(116.3,22)" stroke="#e9eef3" fill="none" stroke-width="1.5" stroke-linecap="round" stroke-linejoin="round" opacity=".33"><path d="M13 8V.8H.8v20.9H9"/><path d="M.8 4h12.2M.8 19h8"/><ellipse cx="16" cy="12.5" rx="6" ry="4.3"/><path d="M12.5 16.5l-1 3 3.5-2"/><path d="M13.5 12.5h.1M16 12.5h.1M18.5 12.5h.1" stroke-width="1.8"/></g>
<g transform="translate(149,22)" stroke="#e9eef3" fill="none" stroke-width="1.5" stroke-linecap="round" stroke-linejoin="round" ><rect x=".8" y="4" width="21.4" height="14" rx="1.5"/><path d="M4 4V2.8c0-1.1.9-2 2-2h11c1.100 0 2 .9 2 2V4M4 18v1.200c0 1.100.9 2 2 2h11c1.100 0 2-.9 2-2V18"/><path d="M6.500 4v14"/><rect x="9.500" y="7" width="9.500" height="4"/></g>
<g transform="translate(180.8,22)" stroke="#e9eef3" fill="none" stroke-width="1.5" stroke-linecap="round" stroke-linejoin="round" opacity=".33"><rect x=".8" y=".8" width="21.2" height="21.2"/><path d="M6 6.500l10.500 10M16.500 6.500c-4 1.500-7 5-8 10" stroke-width="2.6"/></g>
<g transform="translate(213.2,22)" stroke="#e9eef3" fill="none" stroke-width="1.5" stroke-linecap="round" stroke-linejoin="round" ><rect x=".8" y=".8" width="21.2" height="21.2"/><text x="5.3" y="15.8" font-family="Liberation Sans, sans-serif" font-size="12.5" font-weight="bold" fill="#e9eef3" stroke="none" font-style="italic">W</text></g>
<g transform="translate(245.9,22)" stroke="#e9eef3" fill="none" stroke-width="1.5" stroke-linecap="round" stroke-linejoin="round" ><rect x=".8" y=".8" width="21.2" height="21.2"/><text x="3" y="14.3" font-family="Liberation Sans, sans-serif" font-size="7.6" font-weight="bold" fill="#e9eef3" stroke="none" letter-spacing=".2">PDF</text></g>
<g transform="translate(277.9,22)" stroke="#e9eef3" fill="none" stroke-width="1.5" stroke-linecap="round" stroke-linejoin="round" ><path d="M11.500 1v21M1 10.500h21"/><path d="M7.500 5L11.500 1l4 4M4.500 7L1 10.500 4.500 14M18.500 7l3.500 3.500-3.500 3.500"/></g>
<g transform="translate(310.5,22)" stroke="#e9eef3" fill="none" stroke-width="1.5" stroke-linecap="round" stroke-linejoin="round" ><path d="M11 21.700H.8V.8h21.200v10.500"/><path d="M.8 4.500h21.200M6 4.500v17"/><rect x="14.500" y="15" width="7.800" height="7" rx=".8" stroke-width="1.800"/><path d="M16 15v-1.700c0-3 4.800-3 4.800 0V15"/><path d="M18 18.500h.8" stroke-width="1.600"/></g>
<g transform="translate(352.8,22)" stroke="#e9eef3" fill="none" stroke-width="1.5" stroke-linecap="round" stroke-linejoin="round" ><rect x=".8" y="6" width="8.700" height="15.700" rx="2"/><rect x="12.800" y="6" width="8.700" height="15.700" rx="2"/><path d="M3.300 6V.8h4.700V6M14.300 6V.8h4.700V6"/><path d="M9.500 9h3.300v3.500H9.500"/></g>
<g transform="translate(384.8,22)" stroke="#e9eef3" fill="none" stroke-width="1.5" stroke-linecap="round" stroke-linejoin="round" ><rect x=".8" y=".8" width="21.400" height="21"/><path d="M.8 4.500h21.400"/><path d="M5 13h11.500M12.500 9.300l4.200 3.700-4.200 3.700"/></g>
<g transform="translate(416.7,22)" stroke="#e9eef3" fill="none" stroke-width="1.5" stroke-linecap="round" stroke-linejoin="round" ><path d="M1.500 4v16M5 12h19M12 5l-7 7 7 7"/></g>
<g transform="translate(451.2,22)" stroke="#e9eef3" fill="none" stroke-width="1.5" stroke-linecap="round" stroke-linejoin="round" ><path d="M1 12h19M8 5l-7 7 7 7"/></g>
<g transform="translate(483.2,22)" stroke="#e9eef3" fill="none" stroke-width="1.5" stroke-linecap="round" stroke-linejoin="round" ><path d="M0 12h19M12 5l7 7-7 7"/></g>
<g transform="translate(513,22)" stroke="#e9eef3" fill="none" stroke-width="1.5" stroke-linecap="round" stroke-linejoin="round" ><path d="M22.700 4v16M0 12h19M12 5l7 7-7 7"/></g>
<g transform="translate(548.8,22)" stroke="#e9eef3" fill="none" stroke-width="1.5" stroke-linecap="round" stroke-linejoin="round" ><path d="M1 6h17M13 1l5 5-5 5M19 16.500H2M7 11.500l-5 5 5 5"/></g>
<g transform="translate(580,22)" stroke="#e9eef3" fill="none" stroke-width="1.5" stroke-linecap="round" stroke-linejoin="round" opacity=".33"><path d="M.8.800h19L12 10v9l-3.500 2.500V10z"/><path d="M8.500 10h3.500"/></g>
<g transform="translate(611.3,22)" stroke="#e9eef3" fill="none" stroke-width="1.5" stroke-linecap="round" stroke-linejoin="round" opacity=".33"><rect x=".8" y=".8" width="21.200" height="21.200"/><text x="3.5" y="10.5" font-family="Liberation Sans, sans-serif" font-size="8" font-weight="bold" fill="#e9eef3" stroke="none" >A</text><text x="12.5" y="19.5" font-family="Liberation Sans, sans-serif" font-size="8" font-weight="bold" fill="#e9eef3" stroke="none" >Z</text><path d="M14 6.500h5M17 4.500l2 2-2 2M9 16h-5M6 14l-2 2 2 2" stroke-width="1.100"/></g>
<g transform="translate(653.2,22)" stroke="#e9eef3" fill="none" stroke-width="1.5" stroke-linecap="round" stroke-linejoin="round" ><path d="M13 21.700H.8V2.500h6"/><rect x="10" y=".8" width="12" height="17.500"/><path d="M13 5h6M17 9h2"/><path d="M13 12H4M7 8.500L3.500 12 7 15.500"/></g>
<g transform="translate(685.9,22)" stroke="#e9eef3" fill="none" stroke-width="1.5" stroke-linecap="round" stroke-linejoin="round" opacity=".33"><rect x=".8" y="4" width="11.500" height="17.700" rx="1"/><path d="M9 .8h12.500v20.900H16"/><path d="M4 8h5M4 12.500h2"/><path d="M8 12.500h10.500M15.500 9l3.500 3.500-3.500 3.500"/></g>
<g transform="translate(717.8,22)" stroke="#e9eef3" fill="none" stroke-width="1.5" stroke-linecap="round" stroke-linejoin="round" ><path d="M8 21.700H.8V.8h17.700V9"/><rect x="4.500" y="3.500" width="10.500" height="3.500" stroke-width="1.800"/><circle cx="16.300" cy="15.800" r="5.700" stroke-width="1.700"/><text x="13.5" y="19.3" font-family="Liberation Sans, sans-serif" font-size="9" font-weight="bold" fill="#e9eef3" stroke="none" >$</text></g>
<g transform="translate(750.5,22)" stroke="#e9eef3" fill="none" stroke-width="1.5" stroke-linecap="round" stroke-linejoin="round" opacity=".33"><circle cx="8.500" cy="9" r="8"/><circle cx="17.500" cy="17.500" r="4.700"/><text x="5" y="13" font-family="Liberation Sans, sans-serif" font-size="11" font-weight="bold" fill="#e9eef3" stroke="none" >S</text></g>
<g transform="translate(782.9,22)" stroke="#e9eef3" fill="none" stroke-width="1.5" stroke-linecap="round" stroke-linejoin="round" ><path d="M11.300.8v20.900M.8 21.700h21.500M1 3.500h21" stroke-width="1.800"/><rect x="1.500" y="8" width="5" height="8.500" rx="1.500" stroke-width="1.700"/><rect x="16.500" y="8" width="5" height="8.500" rx="1.500" stroke-width="1.700"/><path d="M4 3.500V8M19 3.500V8"/><circle cx="11.300" cy="2.500" r="1.500"/></g>
<g transform="translate(815,22)" stroke="#e9eef3" fill="none" stroke-width="1.5" stroke-linecap="round" stroke-linejoin="round" opacity=".33"><rect x=".8" y=".8" width="21.200" height="21.200"/><path d="M11.500.8v21.200"/><text x="3" y="16.5" font-family="Liberation Sans, sans-serif" font-size="11" font-weight="bold" fill="#e9eef3" stroke="none" >$</text></g>
<g transform="translate(847.4,22)" stroke="#e9eef3" fill="none" stroke-width="1.5" stroke-linecap="round" stroke-linejoin="round" ><path d="M10 21.700H.8V.8h17.700V9M10 .8V10"/><text x="3.5" y="16.5" font-family="Liberation Sans, sans-serif" font-size="10" font-weight="bold" fill="#e9eef3" stroke="none" >$</text><circle cx="15.300" cy="14.500" r="3.800"/><path d="M18 17.500l3.800 4"/></g>
<g transform="translate(889.5,22)" stroke="#e9eef3" fill="none" stroke-width="1.5" stroke-linecap="round" stroke-linejoin="round" ><path d="M.8.800v21h21"/><path d="M6 15.500l1.500-4.500L17.500 1.500c.8-.8 2-.8 2.800 0l.7.700c.8.800.8 2 0 2.800L11 15z"/><path d="M6 15.500l1.500-4.500 3.500 4z" fill="#e9eef3"/></g>
<g transform="translate(921.8,22)" stroke="#e9eef3" fill="none" stroke-width="1.5" stroke-linecap="round" stroke-linejoin="round" ><path d="M6.500 21.700H.8V.8h21.200V8.500"/><path d="M.8 5h21.200" stroke-width="2"/><circle cx="15.300" cy="15.300" r="2.200"/><circle cx="15.300" cy="15.300" r="5.200" stroke-width="1.400"/><path d="M20.30 15.30L22.60 15.30M18.84 18.84L20.46 20.46M15.30 20.30L15.30 22.60M11.76 18.84L10.14 20.46M10.30 15.30L8.00 15.30M11.76 11.76L10.14 10.14M15.30 10.30L15.30 8.00M18.84 11.76L20.46 10.14" stroke-width="2.600" stroke-linecap="butt"/></g>
<g transform="translate(954,22)" stroke="#e9eef3" fill="none" stroke-width="1.5" stroke-linecap="round" stroke-linejoin="round" ><path d="M6.500 21.700H.8V.8h17.700V4"/><path d="M3.500 7h9M3.500 14h2"/><path d="M17.500 5h3v2.800h2V12H19l-4.500 4.500v5.200h-6v-3.200H11v-3L17.500 9z" stroke-width="1.600"/></g>
<g transform="translate(986,22)" stroke="#e9eef3" fill="none" stroke-width="1.5" stroke-linecap="round" stroke-linejoin="round" opacity=".33"><path d="M3 .8h16"/><path d="M.8 4h21v13.500h-4.300v4l-4.500-4H.8z"/><path d="M4.500 8.500h13.500M4.500 12.500h13.500"/></g>
<g transform="translate(1018.6,22)" stroke="#e9eef3" fill="none" stroke-width="1.5" stroke-linecap="round" stroke-linejoin="round" opacity=".33"><path d="M4 .8h17.500v12"/><path d="M.8 4h17.200v10.500h-2v4l-4.500-4H.8"/><path d="M4 8h10.500"/><path d="M2 17h8M7 13.500l3.500 3.500L7 20.500"/><path d="M13 21.500l4-2.500 1.500 2.500"/></g>
<g transform="translate(1061,22)" stroke="#e9eef3" fill="none" stroke-width="1.5" stroke-linecap="round" stroke-linejoin="round" ><path d="M9 21.700H.8V.8h18.700V9"/><path d="M4 5l1.500 1.700L8.500 3M4 11l1.500 1.700L8.500 9"/><circle cx="16.300" cy="15.800" r="5.700" stroke-width="1.700"/><path d="M16.300 12.500v3.500M16.300 18.500v.2" stroke-width="2"/></g>
<g transform="translate(1093,22)" stroke="#e9eef3" fill="none" stroke-width="1.5" stroke-linecap="round" stroke-linejoin="round" ><path d="M7 15H.8V.8h21.400V9"/><path d="M.8 4.500h21.400" stroke-width="2"/><circle cx="16" cy="15.800" r="5.700" stroke-width="1.700"/><path d="M16 12.500v3.500M16 18.500v.2" stroke-width="2"/></g>
<g transform="translate(1125.6,22)" stroke="#e9eef3" fill="none" stroke-width="1.5" stroke-linecap="round" stroke-linejoin="round" ><rect x=".8" y="3" width="21" height="19" rx=".5" stroke-width="1.700"/><path d="M5.500 3V.8h11.500V3v3H5.500z"/><g stroke-width="2.600" stroke-linecap="butt"><path d="M5 10.300h3M9.800 10.300h3M14.600 10.300h3M5 14h3M9.800 14h3M14.600 14h3M5 17.700h3M9.800 17.700h3M14.600 17.700h3"/></g></g>
<g transform="translate(1157.8,22)" stroke="#e9eef3" fill="none" stroke-width="1.5" stroke-linecap="round" stroke-linejoin="round" opacity=".33"><rect x="6.500" y=".8" width="10" height="9"/><rect x=".8" y="13" width="9.500" height="9"/><rect x="12.500" y="13" width="9.500" height="9"/><path d="M5.500 13v-1.500h12V13M11.500 9.800v1.700"/></g>
<g transform="translate(1189.7,22)" stroke="#e9eef3" fill="none" stroke-width="1.5" stroke-linecap="round" stroke-linejoin="round" ><circle cx="11.500" cy="6.500" r="5.700" stroke-width="1.700"/><path d="M6.500 10.500v3.500H2.500c-1 0-1.700.7-1.700 1.700v4.300c0 1 .7 1.700 1.700 1.700h19" stroke-width="1.700"/><path d="M16.500 10.500v3.500h5"/></g>
</svg>
<svg class="a" style="left:13.500px;top:0" width="16" height="24" viewBox="0 0 16 24"><path d="M1.200 2v16.800l4-3.600 3.100 7.200 2.900-1.200-3.100-7h5.900z" fill="#fff" stroke="#1c2630" stroke-width="1.300" stroke-linejoin="round"/></svg>
<div class="a" style="left:6px;top:562px;width:1204px;height:40px;background:#fff"></div>
<div class="a" style="left:12px;top:569px;width:551px;height:12.500px;background:#e4e9ed;border:1px solid #aeb7bf;border-radius:2px"></div>
<div class="a" style="left:655px;top:569px;width:215px;height:12.500px;background:#e4e9ed;border:1px solid #aeb7bf;border-radius:2px"></div>
<div class="a" style="left:875px;top:569px;width:213px;height:12.500px;background:#e4e9ed;border:1px solid #aeb7bf;border-radius:2px"></div>
<div class="lbl" style="left:588px;top:568.6px;letter-spacing:-0.352px;">27.09.23</div>
<div class="a" style="left:12px;top:587px;width:1076px;height:13px;background:#fa0207"></div>
<div class="a" style="left:33.200px;top:587px;width:1.200px;height:13px;background:#fff"></div>
<svg class="a" style="left:16.500px;top:587.500px" width="12" height="12" viewBox="0 0 12 12"><circle cx="6" cy="6" r="5.300" fill="#fdeaea"/><path d="M3.600 3.200l4.800 5.600M8.400 3.200L3.600 8.800" stroke="#3a1010" stroke-width="1.300"/></svg>
<div class="lbl" style="left:36.5px;top:586.3px;letter-spacing:-0.354px;color:#fff">No matching records found&nbsp; 'Business Partners' (OCRD) (ODBC -2028)&nbsp; [Message 131-183]</div>
<div class="t" style="left:1111px;top:571.500px;font-size:22px;font-weight:bold;color:#a6a6a6;letter-spacing:-1.500px;-webkit-text-stroke:.700px #a6a6a6;transform:scaleY(.92);transform-origin:0 0">SAP</div>
<div class="t" style="left:1156px;top:573.500px;font-size:7.800px;color:#b0b0b0;letter-spacing:.450px">Business</div>
<div class="t" style="left:1155.500px;top:580px;font-size:13px;font-weight:bold;color:#eab540;letter-spacing:.200px">One</div>
<svg class="a" style="left:1199px;top:592px" width="9" height="10" viewBox="0 0 9 10"><path d="M7 1v1M7 4v1M4 4v1M7 7v1M4 7v1M1 7v1" stroke="#8a8a8a" stroke-width="1.600"/></svg>
<div class="a" style="left:6px;top:602px;width:1204px;height:27px;background:#0c1318"></div>
<div class="a" style="left:444px;top:602px;width:53px;height:27px;background:#34383c"></div>
<div class="a" style="left:1206.500px;top:602px;width:1px;height:27px;background:#9aa0a4"></div>
<svg class="a" style="left:24px;top:615px" width="19" height="14" viewBox="0 0 19 14"><path d="M.5 3l6.700-1v6.200H.5zM8.400 1.800L18 .5v7.700H8.400zM.5 9.600h6.700V14H.5zM8.400 9.600H18V14H8.400z" fill="#fff"/></svg>
<svg class="a" style="left:78px;top:613px" width="22" height="16" viewBox="0 0 22 16"><circle cx="11.500" cy="9.500" r="6" fill="none" stroke="#f2f2f2" stroke-width="1.500"/><path d="M7 14l-2.500 3" stroke="#f2f2f2" stroke-width="1.500"/></svg>
<div class="a" style="left:131.500px;top:614.500px;width:23px;height:15px;background:#f6d670;border-radius:1px"></div><div class="a" style="left:131.500px;top:613.500px;width:9px;height:3px;background:#e9b93f"></div><div class="a" style="left:135px;top:624px;width:16px;height:5px;background:#43a2e3"></div>
<div class="a" style="left:191px;top:612px;width:20px;height:17px;background:#21a366"></div><div class="a" style="left:201px;top:612px;width:10px;height:9px;background:#33c481"></div><div class="a" style="left:191px;top:621px;width:20px;height:8px;background:#107c41"></div><div class="a" style="left:184.500px;top:617px;width:13px;height:12px;background:#0b6b36"></div>
<div class="t" style="left:187px;top:619px;font-size:12px;font-weight:bold;color:#fff">x</div>
<svg class="a" style="left:239px;top:610.500px" width="28" height="19" viewBox="0 0 28 19"><circle cx="14" cy="14" r="13.300" fill="#e8453c"/><path d="M14 14L2.500 20.500A13.300 13.300 0 0 1 2.500 7.300z" fill="#1ea362"/><path d="M14 14l11.500-6.700a13.300 13.300 0 0 1 0 13.300z" fill="#fbc116"/><circle cx="14" cy="14" r="6.200" fill="#fff"/><circle cx="14" cy="14" r="4.800" fill="#4a8af4"/></svg>
<div class="a" style="left:293px;top:612px;width:19px;height:17px;background:#1d4f91"></div><div class="a" style="left:297px;top:615.500px;width:13px;height:14px;background:#9aa0a6;border:1px solid #d5d8db"></div>
<svg class="a" style="left:347px;top:610px" width="28" height="19" viewBox="0 0 28 19"><g transform="translate(13.500,14.500)"><g fill="#f3f5f6"><rect x="-3" y="-13.500" width="6" height="6" rx="1" transform="rotate(0)"/><rect x="-3" y="-13.500" width="6" height="6" rx="1" transform="rotate(45)"/><rect x="-3" y="-13.500" width="6" height="6" rx="1" transform="rotate(90)"/><rect x="-3" y="-13.500" width="6" height="6" rx="1" transform="rotate(135)"/><rect x="-3" y="-13.500" width="6" height="6" rx="1" transform="rotate(180)"/><rect x="-3" y="-13.500" width="6" height="6" rx="1" transform="rotate(225)"/><rect x="-3" y="-13.500" width="6" height="6" rx="1" transform="rotate(270)"/><rect x="-3" y="-13.500" width="6" height="6" rx="1" transform="rotate(315)"/></g><circle r="8" fill="none" stroke="#f3f5f6" stroke-width="5"/></g><circle cx="24" cy="17.500" r="2.500" fill="#f3f5f6"/></svg>
<div class="a" style="left:403px;top:611.500px;width:26.500px;height:18px;background:#4a4e52;border:1.500px solid #b9bdc0"></div><div class="a" style="left:409px;top:620px;width:9px;height:9px;background:#e04a3f;transform:rotate(45deg)"></div><div class="a" style="left:418px;top:618px;width:9px;height:11px;background:#3f8fe0;transform:skewX(-25deg)"></div><div class="a" style="left:418px;top:625px;width:8px;height:4px;background:#8bd43c"></div>
<div class="t" style="left:407px;top:613.500px;font-size:7px;color:#fff;font-weight:bold">&gt;_</div>
<div class="a" style="left:458.500px;top:612px;width:17px;height:17px;background:#2a5fa5"></div><div class="a" style="left:462px;top:616px;width:18px;height:13px;background:#efe3b5;border:1px solid #b7a56a"></div><div class="a" style="left:466px;top:619px;width:3px;height:10px;background:#c25b3a"></div><div class="a" style="left:471px;top:622px;width:3px;height:7px;background:#4f8c3e"></div><div class="a" style="left:475.500px;top:618px;width:2px;height:11px;background:#6a6f9e"></div>
<div class="a" style="left:512.500px;top:611px;width:26px;height:18px;background:#ef443b"></div>
<svg class="a" style="left:512.500px;top:611px" width="26" height="18" viewBox="0 0 26 18"><path d="M8.500 16l7-7.500 7 7.500-7 7.500z" fill="#fff"/><path d="M4.200 9.800l5.800 6.200-5.800 6.200" fill="none" stroke="#fff" stroke-width="2.600"/><path d="M8.500 16l4.600-4.900" stroke="#ef443b" stroke-width="1.200"/></svg>
<svg class="a" style="left:968px;top:620px" width="15" height="9" viewBox="0 0 15 9"><path d="M1.500 8L7.500 2l6 6" fill="none" stroke="#f2f2f2" stroke-width="1.500"/></svg>
<svg class="a" style="left:992px;top:617px" width="19" height="12" viewBox="0 0 19 12"><rect x="4.500" y="2" width="13" height="10" fill="none" stroke="#f2f2f2" stroke-width="1.300"/><rect x=".8" y=".8" width="5.500" height="4" fill="#0c1318" stroke="#f2f2f2" stroke-width="1.100"/><path d="M3.500 5v7" stroke="#f2f2f2" stroke-width="1.100"/></svg>
<svg class="a" style="left:1018px;top:617px" width="19" height="12" viewBox="0 0 19 12"><path d="M1.200 5h2.800l4-3.800v11.600l-4-3.800h-2.800z" fill="none" stroke="#f2f2f2" stroke-width="1.100" stroke-linejoin="round"/><circle cx="13.500" cy="9" r="3.800" fill="#e5322d"/><path d="M12 7.500l3 3M15 7.500l-3 3" stroke="#fff" stroke-width="1"/></svg>
<div class="t" style="left:1048.500px;top:618.500px;font-size:12px;color:#f4f4f4;letter-spacing:-0.200px;-webkit-text-stroke:.250px #f4f4f4">ENG</div>
<div class="t" style="left:1094px;top:608px;font-size:12.500px;color:#f4f4f4;letter-spacing:-0.250px;-webkit-text-stroke:.250px #f4f4f4">5:09 PM</div>
<div class="a" style="left:1166px;top:616px;width:17.500px;height:16px;border:1.500px solid #f2f2f2"></div>
<div class="a" style="left:0;top:628.600px;width:1223px;height:6.400px;background:#fdfdfd"></div>
</div></body></html>
